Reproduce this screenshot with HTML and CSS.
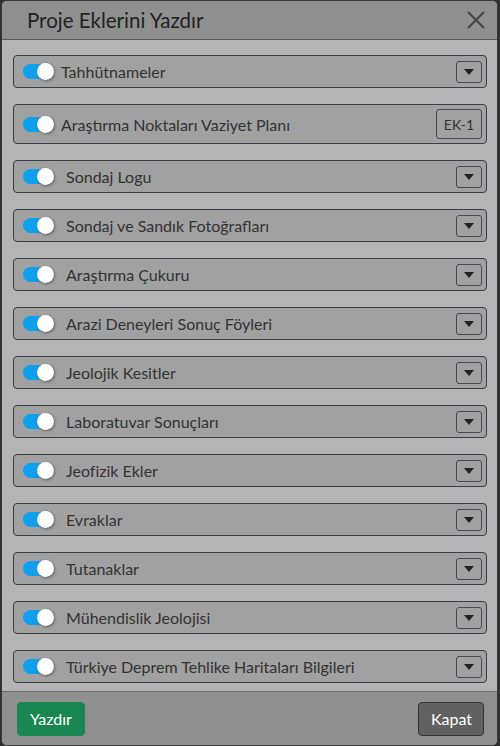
FILE: index.html
```html
<!DOCTYPE html>
<html lang="tr">
<head>
    <meta charset="UTF-8">
    <meta name="viewport" content="width=device-width, initial-scale=1.0">
    <title>Proje Eklerini Yazdır</title>
    <link rel="stylesheet" href="styles.css">
</head>
<body>
    <div class="modal">
        <div class="modal-header">
            <h1>Proje Eklerini Yazdır</h1>
            <button class="close-button" aria-label="Kapat">
                <svg width="18" height="18" viewBox="0 0 18 18">
                    <path d="M1 1 L17 17 M17 1 L1 17" stroke="#444" stroke-width="2" fill="none"/>
                </svg>
            </button>
        </div>
        <div class="modal-body" id="attachments"></div>
        <div class="modal-footer">
            <button class="btn btn-print">Yazdır</button>
            <button class="btn btn-close">Kapat</button>
        </div>
    </div>

    <script>
        const attachments = [
            { name: 'Tahhütnameler', tight: true },
            { name: 'Araştırma Noktaları Vaziyet Planı', tight: true, tag: 'EK-1' },
            { name: 'Sondaj Logu' },
            { name: 'Sondaj ve Sandık Fotoğrafları' },
            { name: 'Araştırma Çukuru' },
            { name: 'Arazi Deneyleri Sonuç Föyleri' },
            { name: 'Jeolojik Kesitler' },
            { name: 'Laboratuvar Sonuçları' },
            { name: 'Jeofizik Ekler' },
            { name: 'Evraklar' },
            { name: 'Tutanaklar' },
            { name: 'Mühendislik Jeolojisi' },
            { name: 'Türkiye Deprem Tehlike Haritaları Bilgileri' }
        ];

        const caret = `<svg width="10" height="6" viewBox="0 0 10 6"><path d="M0 0 H10 L5 6 Z" fill="#222"/></svg>`;

        document.getElementById('attachments').innerHTML = attachments.map(item => `
            <div class="item">
                <span class="switch"><span class="knob"></span></span>
                <span class="item-name${item.tight ? ' tight' : ''}">${item.name}</span>
                ${item.tag
                    ? `<button class="tag-button">${item.tag}</button>`
                    : `<button class="drop-button">${caret}</button>`}
            </div>
        `).join('');
    </script>
</body>
</html>
```

FILE: styles.css
```css
body {
    font-family: Lato, "Noto Sans", sans-serif;
    margin: 0;
    padding: 0;
    background-color: #2e2e2e;
}
.modal {
    margin: 0 2px 0 1px;
    height: 746px;
    box-sizing: border-box;
    border: 1px solid #3a3a3a;
    border-radius: 6px;
    background: #b4b4b4;
    display: flex;
    flex-direction: column;
    overflow: hidden;
}
.modal-header {
    background: #8f8f8f;
    height: 39px;
    border-bottom: 1px solid #5a5a5a;
    display: flex;
    align-items: center;
    justify-content: space-between;
    padding: 0 11px 0 25px;
}
.modal-header h1 {
    margin: 0;
    font-size: 20.5px;
    font-weight: 400;
    color: #222;
}
.close-button {
    background: none;
    border: none;
    padding: 0;
    width: 20px;
    height: 20px;
    display: flex;
    align-items: center;
    justify-content: center;
}
.modal-body {
    flex: 1;
    padding: 15px 10px 8px 11px;
    display: flex;
    flex-direction: column;
    gap: 16px;
}
.item {
    display: flex;
    align-items: center;
    min-height: 33px;
    box-sizing: border-box;
    padding: 4px 4px 4px 9px;
    background: #a1a1a1;
    border: 1px solid #3c3c46;
    border-radius: 4px;
}
.switch {
    position: relative;
    width: 30px;
    height: 15px;
    border-radius: 8px;
    background: #0ea0ec;
    flex-shrink: 0;
}
.knob {
    position: absolute;
    right: -1px;
    top: -1px;
    width: 17px;
    height: 17px;
    border-radius: 50%;
    background: #fff;
    box-shadow: 1px 1px 3px rgba(0, 0, 0, 0.4);
}
.item-name {
    flex: 1;
    margin-left: 13px;
    font-size: 16px;
    color: #333;
}
.item-name.tight {
    margin-left: 8px;
}
.drop-button, .tag-button {
    background: transparent;
    border: 1px solid #48484f;
    border-radius: 3px;
    padding: 0;
    display: flex;
    align-items: center;
    justify-content: center;
}
.drop-button {
    width: 26px;
    height: 22px;
}
.tag-button {
    width: 46px;
    height: 30px;
    font-family: Lato, "Noto Sans", sans-serif;
    font-size: 14px;
    color: #333;
}
.modal-footer {
    background: #8f8f8f;
    border-top: 1px solid #6a6a6a;
    height: 54px;
    display: flex;
    align-items: center;
    justify-content: space-between;
    padding: 0 13px 0 15px;
}
.btn {
    height: 34px;
    border-radius: 4px;
    font-family: Lato, "Noto Sans", sans-serif;
    font-size: 16px;
    color: #fff;
    padding: 0 12px;
}
.btn-print {
    background: #1a8753;
    border: 1px solid #1a8753;
    width: 68px;
}
.btn-close {
    background: #616161;
    border: 1px solid #333;
    width: 66px;
}
```
